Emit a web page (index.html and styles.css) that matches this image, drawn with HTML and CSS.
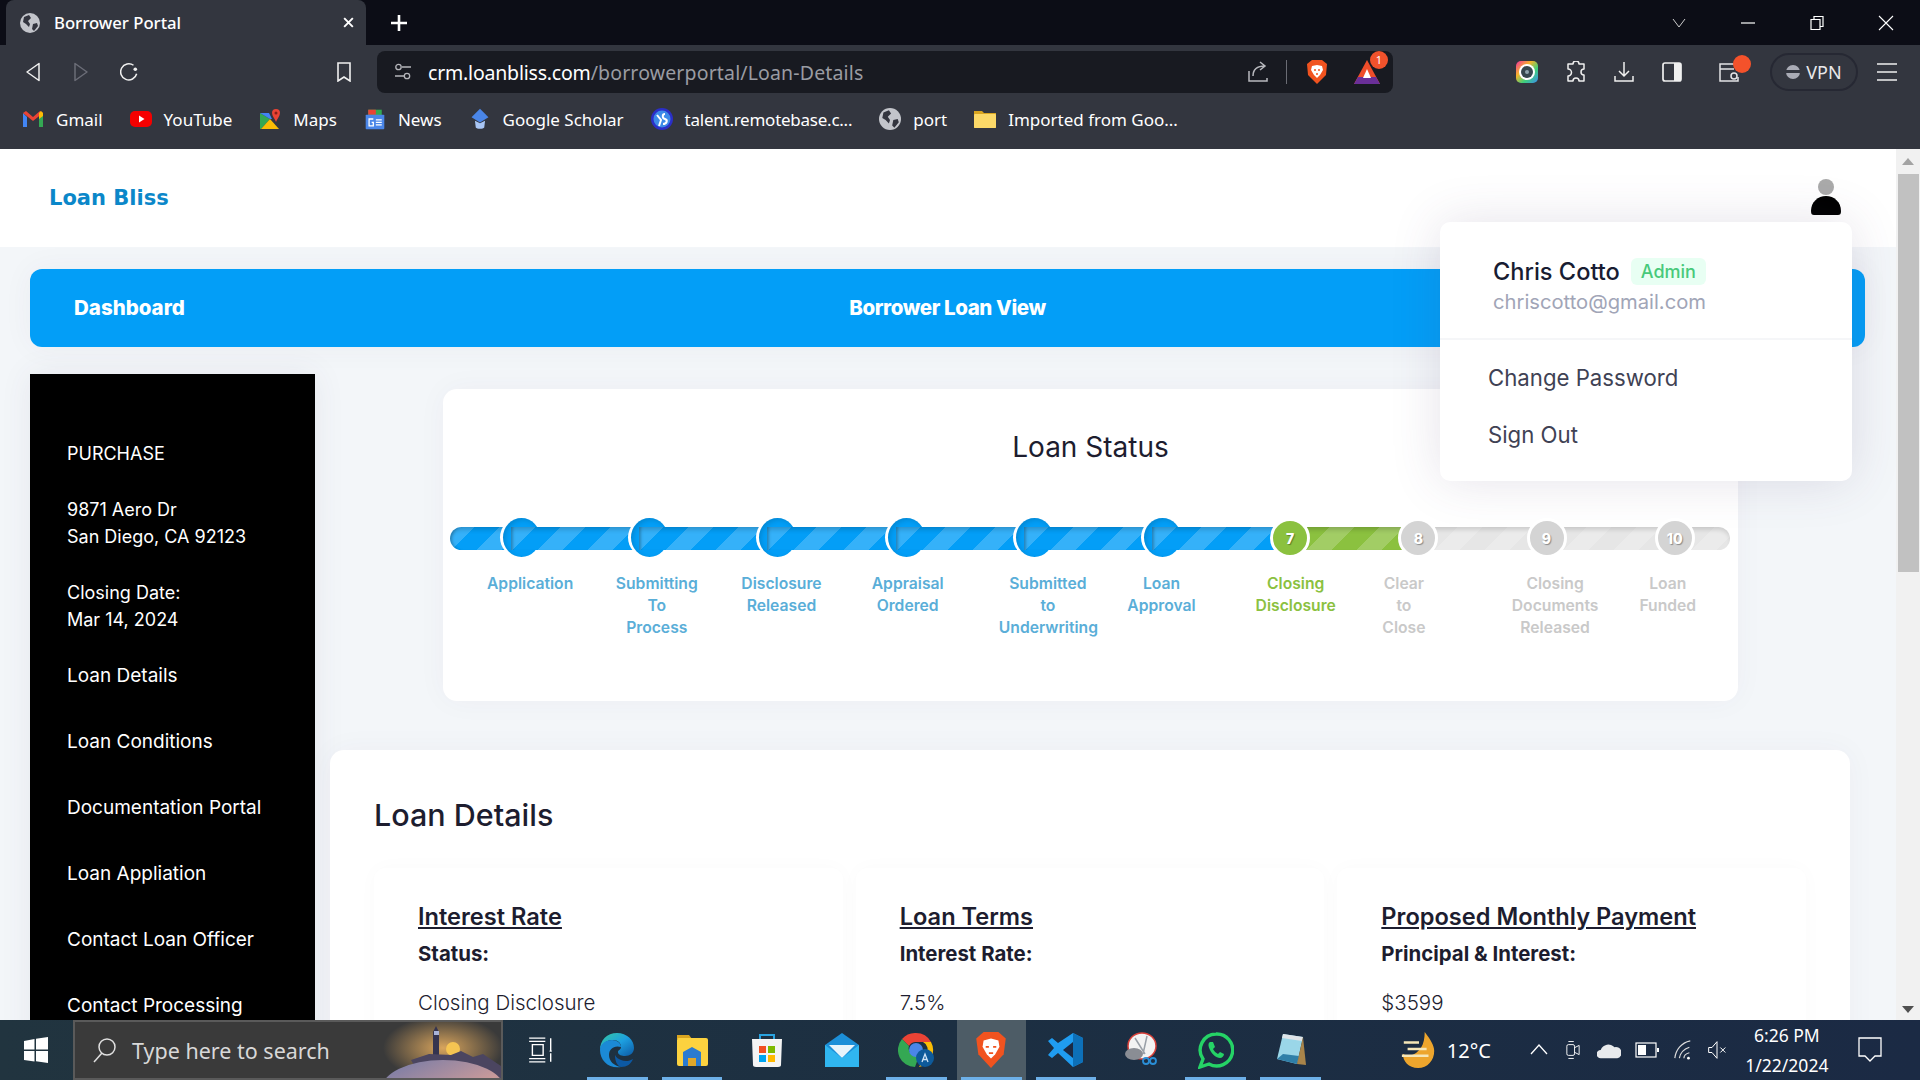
FILE: index.html
```html
<!DOCTYPE html>
<html lang="en">
<head>
    <meta charset="UTF-8">
    <title>Borrower Portal</title>
    <link rel="stylesheet" href="styles.css">
</head>
<body>

<!-- browser window chrome -->
<div class="tabstrip">
    <div class="tab">
        <svg class="ico-20" viewBox="0 0 20 20"><circle cx="10" cy="10" r="10" fill="#c3c5cb"/><path d="M4 4l5-2 2 3-3 3 2 3-1 3-3-3-3-2zM13 11l4-1 1 3-4 5-2-2z" fill="#33353f"/></svg>
        <span class="tab-title">Borrower Portal</span>
        <svg class="tab-close" viewBox="0 0 12 12"><path d="M2 2l8 8M10 2l-8 8" stroke="#fff" stroke-width="1.8"/></svg>
    </div>
    <svg class="tab-plus" viewBox="0 0 20 20"><path d="M10 2v16M2 10h16" stroke="#fff" stroke-width="2.6"/></svg>
    <div class="winctl">
        <svg class="winctl-ico" viewBox="0 0 16 16"><path d="M2 4l6 8 6-8" fill="none" stroke="#ccc" stroke-width="1"/></svg>
        <svg class="winctl-ico" viewBox="0 0 16 16"><path d="M1 8h14" stroke="#fff" stroke-width="1.2"/></svg>
        <svg class="winctl-ico" viewBox="0 0 16 16"><path d="M2 4.5h9v10H2zM5 4.5V1.500h9v10h-3" fill="none" stroke="#fff" stroke-width="1.2"/></svg>
        <svg class="winctl-ico" viewBox="0 0 16 16"><path d="M1 1l14 14M15 1L1 15" stroke="#fff" stroke-width="1.1"/></svg>
    </div>
</div>

<div class="toolbar">
    <div class="nav-btns">
        <svg class="nav-ico" viewBox="0 0 16 20"><path d="M14 1.500v17L2 10z" fill="none" stroke="#f0f0f0" stroke-width="1.5" stroke-linejoin="round"/></svg>
        <svg class="nav-ico" viewBox="0 0 16 20"><path d="M2 1.500v17L14 10z" fill="none" stroke="#6b6d77" stroke-width="1.5" stroke-linejoin="round"/></svg>
        <svg class="nav-ico" viewBox="0 0 20 20"><path d="M15 2.500A9 9 0 1 0 18.500 12" fill="none" stroke="#f0f0f0" stroke-width="1.7"/><circle cx="17" cy="7" r="2" fill="#f0f0f0"/></svg>
    </div>
    <svg class="bookmark-ico" viewBox="0 0 14 20"><path d="M1 1h12v18l-6-4-6 4z" fill="none" stroke="#f0f0f0" stroke-width="1.600"/></svg>
    <div class="urlbar">
        <svg class="ico-18" viewBox="0 0 18 18"><circle cx="4.500" cy="4" r="2.700" fill="none" stroke="#b5b6bb" stroke-width="1.300"/><path d="M8 4h9M1 13h9" stroke="#b5b6bb" stroke-width="1.300"/><circle cx="13" cy="13" r="2.700" fill="none" stroke="#b5b6bb" stroke-width="1.300"/></svg>
        <span class="url-text"><span class="url-host">crm.loanbliss.com</span>/borrowerportal/Loan-Details</span>
        <svg class="ico-22" viewBox="0 0 22 22"><path d="M2 10v10h18v-3M6 15c0-6 4-10 12-10M13 1l5 4-5 4" fill="none" stroke="#b8b9be" stroke-width="1.500"/></svg>
        <span class="url-sep"></span>
        <svg class="ico-shield" viewBox="0 0 22 26"><path d="M6 1h10l5 4-1 11-9 9-9-9L1 5z" fill="#f1531f"/><path d="M6 7l5-1 5 1 1 4-3 5-3 3-3-3-3-5z" fill="#fff"/><path d="M8 11h2M12 11h2M10 15h2" stroke="#f1531f" stroke-width="1.300"/></svg>
        <span class="rewards">
            <svg class="ico-rewards" viewBox="0 0 28 26"><path d="M14 1l13 24H1z" fill="#ef4d2a"/><path d="M1 25l4-7h18l4 7z" fill="#6a2f98"/><path d="M14 10l4 9h-8z" fill="#fff"/></svg>
            <span class="rewards-badge">1</span>
        </span>
    </div>
    <div class="ext-btns">
        <svg class="ico-24" viewBox="0 0 24 24"><defs><linearGradient id="rb" x1="0" y1="0" x2="1" y2="1"><stop offset="0" stop-color="#f22fa0"/><stop offset=".35" stop-color="#f7b32b"/><stop offset=".65" stop-color="#3ed07a"/><stop offset="1" stop-color="#3b8cf0"/></linearGradient></defs><rect x="1" y="1" width="22" height="22" rx="5" fill="url(#rb)"/><circle cx="12" cy="12" r="8" fill="#fff"/><circle cx="12" cy="12" r="6" fill="#37474f"/><circle cx="12" cy="12" r="2" fill="#90a4ae"/></svg>
        <svg class="ico-22" viewBox="0 0 22 22"><path d="M8 3a3 3 0 0 1 6 0h5v5a3 3 0 0 0 0 6v6h-5a3 3 0 0 0-6 0H3v-5a3 3 0 0 0 0-7V3z" fill="none" stroke="#f0f0f0" stroke-width="1.500" stroke-linejoin="round"/></svg>
        <svg class="ico-22" viewBox="0 0 22 22"><path d="M11 1v14M6 10l5 5 5-5M2 15v5h18v-5" fill="none" stroke="#f0f0f0" stroke-width="1.500"/></svg>
        <svg class="ico-22" viewBox="0 0 22 22"><rect x="2" y="2" width="18" height="18" rx="2" fill="none" stroke="#f0f0f0" stroke-width="1.700"/><rect x="13" y="2" width="7" height="18" fill="#f0f0f0"/></svg>
        <span class="wallet">
            <svg class="ico-22" viewBox="0 0 22 22"><path d="M20 10V3H2v17h18v-4M2 8h14" fill="none" stroke="#e4e4e6" stroke-width="1.500"/><circle cx="16" cy="15" r="3" fill="none" stroke="#e4e4e6" stroke-width="1.500"/></svg>
            <span class="wallet-dot"></span>
        </span>
        <div class="vpn"><span class="vpn-dot"></span>VPN</div>
        <svg class="ico-22" viewBox="0 0 22 22"><path d="M1 3h20M1 11h20M1 19h20" stroke="#f0f0f0" stroke-width="1.700"/></svg>
    </div>
</div>

<div class="bookmarks">
    <a class="bm"><svg class="ico-22" viewBox="0 0 22 22"><path d="M1 5v14h4V9z" fill="#4285f4"/><path d="M17 9v10h4V5z" fill="#34a853"/><path d="M1 5l3-2 7 6 7-6 3 2-10 8z" fill="#ea4335"/><path d="M17 5l2-2 2 2v3l-4 3z" fill="#fbbc05"/></svg>Gmail</a>
    <a class="bm"><svg class="ico-22" viewBox="0 0 22 22"><rect y="3" width="22" height="16" rx="5" fill="#f50000"/><path d="M9 7.500v7l5.500-3.500z" fill="#fff"/></svg>YouTube</a>
    <a class="bm"><svg class="ico-22" viewBox="0 0 22 22"><path d="M1 5l10 6-9 10H1z" fill="#34a853"/><path d="M2 21l9-10 9 10z" fill="#fbbc05"/><path d="M1 5h9l3 6-2 0z" fill="#4285f4"/><path d="M17 1a4 4 0 0 1 4 4c0 3-3 6-4 9-1-3-4-6-4-9a4 4 0 0 1 4-4z" fill="#ea4335"/><circle cx="17" cy="5" r="1.500" fill="#8a1f17"/></svg>Maps</a>
    <a class="bm"><svg class="ico-22" viewBox="0 0 22 26"><path d="M3 2h16v8H3z" fill="#34a853"/><path d="M3 2h9v6H3z" fill="#ea4335"/><rect x="0" y="8" width="22" height="17" rx="1" fill="#4a86e8"/><path d="M9 13H4v8h5v-4H7M12 14h7M12 17h7M12 20h7" fill="none" stroke="#fff" stroke-width="1.500"/></svg>News</a>
    <a class="bm"><svg class="ico-22" viewBox="0 0 22 26"><path d="M11 1l10 10-10 6L1 11z" fill="#4a86e8"/><path d="M5 15l6 3 6-3-1 8c-1 2-9 2-10 0z" fill="#a9c6f5"/></svg>Google Scholar</a>
    <a class="bm"><svg class="ico-22" viewBox="0 0 22 22"><circle cx="11" cy="11" r="11" fill="#2b2fc7"/><circle cx="11" cy="11" r="8.500" fill="#3d8be8"/><path d="M6 7l4 5-2 6M14 6c-3 0-3 4 0 5s2 5-2 5" fill="none" stroke="#fff" stroke-width="2"/></svg>talent.remotebase.c...</a>
    <a class="bm"><svg class="ico-22" viewBox="0 0 20 20"><circle cx="10" cy="10" r="10" fill="#c3c5cb"/><path d="M4 4l5-2 2 3-3 3 2 3-1 3-3-3-3-2zM13 11l4-1 1 3-4 5-2-2z" fill="#33353f"/></svg>port</a>
    <a class="bm"><svg class="ico-22" viewBox="0 0 22 22"><path d="M0 3h8l2 2h12v15H0z" fill="#d9a520"/><rect y="6" width="22" height="14" rx="1" fill="#fcd968"/></svg>Imported from Goo...</a>
</div>

<!-- page -->
<div class="viewport">
    <div class="page">
        <header class="topbar">
            <span class="logo">Loan Bliss</span>
            <svg class="user-ico" viewBox="0 0 32 38"><circle cx="16" cy="9" r="8" fill="#aaa"/><path d="M1 33c0-9 7-15 15-15s15 6 15 15c0 3-1 4-3 4H4c-2 0-3-1-3-4z" fill="#000"/></svg>
        </header>

        <div class="titlebar">
            <span class="titlebar-link">Dashboard</span>
            <span class="titlebar-title">Borrower Loan View</span>
        </div>

        <div class="columns">
            <aside class="sidebar">
                <p class="side-text">PURCHASE</p>
                <p class="side-text">9871 Aero Dr<br>San Diego, CA 92123</p>
                <p class="side-text">Closing Date:<br>Mar 14, 2024</p>
                <nav class="side-nav">
                    <a class="side-link">Loan Details</a>
                    <a class="side-link">Loan Conditions</a>
                    <a class="side-link">Documentation Portal</a>
                    <a class="side-link">Loan Appliation</a>
                    <a class="side-link">Contact Loan Officer</a>
                    <a class="side-link">Contact Processing</a>
                </nav>
            </aside>

            <main class="main">
                <section class="status-card">
                    <h2 class="status-title">Loan Status</h2>
                    <div class="track">
                        <div class="seg seg-lead blue"><span class="fill"></span></div>
                        <div class="seg blue"><span class="dot"></span><span class="fill"></span></div>
                        <div class="seg blue"><span class="dot"></span><span class="fill"></span></div>
                        <div class="seg blue"><span class="dot"></span><span class="fill"></span></div>
                        <div class="seg blue"><span class="dot"></span><span class="fill"></span></div>
                        <div class="seg blue"><span class="dot"></span><span class="fill"></span></div>
                        <div class="seg blue"><span class="dot"></span><span class="fill"></span></div>
                        <div class="seg green"><span class="dot">7</span><span class="fill"></span></div>
                        <div class="seg gray"><span class="dot">8</span><span class="fill"></span></div>
                        <div class="seg gray"><span class="dot">9</span><span class="fill"></span></div>
                        <div class="seg seg-tail gray"><span class="dot">10</span><span class="fill"></span></div>
                    </div>
                    <div class="labels">
                        <span class="label done">Application</span>
                        <span class="label done">Submitting<br>To<br>Process</span>
                        <span class="label done">Disclosure<br>Released</span>
                        <span class="label done">Appraisal<br>Ordered</span>
                        <span class="label done">Submitted<br>to<br>Underwriting</span>
                        <span class="label done">Loan<br>Approval</span>
                        <span class="label now">Closing<br>Disclosure</span>
                        <span class="label todo">Clear<br>to<br>Close</span>
                        <span class="label todo">Closing<br>Documents<br>Released</span>
                        <span class="label todo">Loan<br>Funded</span>
                    </div>
                </section>

                <section class="details-card">
                    <h2 class="details-title">Loan Details</h2>
                    <div class="details-grid">
                        <div class="info">
                            <h3 class="info-head">Interest Rate</h3>
                            <p class="info-key">Status:</p>
                            <p class="info-val">Closing Disclosure</p>
                        </div>
                        <div class="info">
                            <h3 class="info-head">Loan Terms</h3>
                            <p class="info-key">Interest Rate:</p>
                            <p class="info-val">7.5%</p>
                        </div>
                        <div class="info">
                            <h3 class="info-head">Proposed Monthly Payment</h3>
                            <p class="info-key">Principal &amp; Interest:</p>
                            <p class="info-val">$3599</p>
                        </div>
                    </div>
                </section>
            </main>
        </div>

        <div class="user-menu">
            <div class="user-head">
                <div class="user-line"><span class="user-name">Chris Cotto</span><span class="user-badge">Admin</span></div>
                <div class="user-mail">chriscotto@gmail.com</div>
            </div>
            <div class="user-links">
                <a class="user-link">Change Password</a>
                <a class="user-link">Sign Out</a>
            </div>
        </div>
    </div>

    <div class="scrollbar">
        <span class="arrow-up"></span>
        <span class="thumb"></span>
        <span class="arrow-down"></span>
    </div>
</div>

<!-- windows taskbar -->
<div class="taskbar">
    <div class="start">
        <svg class="ico-24w" viewBox="0 0 24 26"><path d="M0 4l10.500-2v10.500H0zM12 1.700L24 0v12.500H12zM0 14h10.500v10.500L0 23zM12 14h12v12l-12-1.800z" fill="#fff"/></svg>
    </div>
    <div class="search">
        <svg class="search-ico" viewBox="0 0 24 26"><circle cx="14" cy="10" r="8" fill="none" stroke="#e0e0e0" stroke-width="1.500"/><path d="M9 16L1 25" stroke="#e0e0e0" stroke-width="1.500"/></svg>
        <span class="search-text">Type here to search</span>
        <svg class="search-art" viewBox="0 0 120 56"><defs><radialGradient id="glow"><stop offset="0" stop-color="#d8a45c"/><stop offset="1" stop-color="#3a3a3a"/></radialGradient><linearGradient id="hill" x1="0" y1="0" x2="1" y2="1"><stop offset="0" stop-color="#6e78a8"/><stop offset=".6" stop-color="#c99a9a"/><stop offset="1" stop-color="#3c4a86"/></linearGradient></defs><ellipse cx="62" cy="26" rx="60" ry="32" fill="url(#glow)"/><circle cx="72" cy="27" r="7" fill="#f5c452"/><path d="M52 34V10l3-6 3 6v24z" fill="#35344f"/><rect x="53" y="9" width="5" height="4" fill="#aab4d8"/><path d="M30 38l18-6 22 1 10-4 12 6 10-3 18 12v12H40z" fill="#4b4560"/><ellipse cx="62" cy="68" rx="62" ry="30" fill="url(#hill)"/></svg>
    </div>
    <div class="task-btns">
        <span class="task task-view"><svg class="ico-26" viewBox="0 0 24 26"><path d="M1 5h15M1 2h15M4 8h10v10H4zM1 21h15M1 24h15M21 2v12M21 16v8M20 14h2" fill="none" stroke="#fff" stroke-width="1.300"/></svg></span>
        <span class="task open"><svg class="ico-36" viewBox="0 0 36 36"><defs><linearGradient id="ed" x1="0" y1="0" x2="1" y2="1"><stop offset="0" stop-color="#35c9a0"/><stop offset=".5" stop-color="#1d9fe0"/><stop offset="1" stop-color="#0c59a4"/></linearGradient></defs><path d="M18 1c10 0 17 7 17 15 0 5-4 8-9 8-3 0-7-1-7-4 0-2 3-2 3-5 0-4-3-7-8-7C7 8 2 13 1 18 1 8 8 1 18 1z" fill="url(#ed)"/><path d="M1 18c0-6 6-10 12-10 5 0 9 3 9 7-7-2-12 2-12 8 0 6 5 11 12 12C10 37 1 29 1 18z" fill="#1b8ad6"/><path d="M22 35c6 0 10-3 12-8-3 2-8 3-12 1-3-1-5-3-6-5 0 6 2 11 6 12z" fill="#0c59a4"/></svg></span>
        <span class="task open"><svg class="ico-36" viewBox="0 0 36 36"><path d="M3 3h12l3 4H3z" fill="#d9a520"/><rect x="3" y="6" width="31" height="28" rx="2" fill="#fcd23f"/><path d="M9 34V20l9-5 9 5v14h-5v-8h-8v8z" fill="#2a7bd0"/><rect x="14" y="26" width="8" height="8" fill="#e0a82a"/></svg></span>
        <span class="task"><svg class="ico-36" viewBox="0 0 36 36"><path d="M11 8V3h14v5" fill="none" stroke="#29a3e0" stroke-width="2"/><path d="M3 7h30l-1 26c0 1-1 2-3 2H7c-2 0-3-1-3-2z" fill="#f4f4f4"/><rect x="10" y="14" width="7" height="7" fill="#f25022"/><rect x="19" y="14" width="7" height="7" fill="#7fba00"/><rect x="10" y="23" width="7" height="7" fill="#00a4ef"/><rect x="19" y="23" width="7" height="7" fill="#ffb900"/></svg></span>
        <span class="task"><svg class="ico-36" viewBox="0 0 36 36"><path d="M1 13L18 1l17 12v22H1z" fill="#1c8fd8"/><path d="M5 13h26L18 26z" fill="#e8f4fb"/><path d="M1 13l17 13 17-13v22H1z" fill="#30b6f0"/></svg></span>
        <span class="task open"><svg class="ico-36" viewBox="0 0 36 36"><path d="M18 1a17 17 0 0 1 15 9H18a8 8 0 0 0-7 4L4 7a17 17 0 0 1 14-6z" fill="#ea4335"/><path d="M33 10a17 17 0 0 1-12 25l7-13a8 8 0 0 0-3-12z" fill="#fbbc05"/><path d="M4 7l7 7a8 8 0 0 0 10 10l-4 11A17 17 0 0 1 4 7z" fill="#34a853"/><circle cx="18" cy="18" r="7" fill="#4a86e8"/><circle cx="27" cy="26" r="9" fill="#0e5a9a"/><path d="M24 30l3-8 3 8M25 27.500h4" fill="none" stroke="#cfe3f5" stroke-width="1.300"/></svg></span>
        <span class="task open active"><svg class="ico-36" viewBox="0 0 30 36"><path d="M8 1h14l7 6-2 15-12 13L3 22 1 7z" fill="#f1531f"/><path d="M8 9l7-2 7 2 1 6-4 7-4 4-4-4-4-7z" fill="#fff"/><path d="M10 15h3M17 15h3M13 21h4" stroke="#f1531f" stroke-width="1.800"/></svg></span>
        <span class="task open"><svg class="ico-36" viewBox="0 0 36 36"><path d="M25 1l10 5v24l-10 5-15-14-6 5-4-3 6-7-6-7 4-3 6 5z" fill="#1f9cf0"/><path d="M25 1l10 5v24l-10 5z" fill="#0d70b8"/><path d="M25 10v16l-10-8z" fill="#1b2a44"/></svg></span>
        <span class="task"><svg class="ico-36" viewBox="0 0 36 36"><ellipse cx="19" cy="14" rx="14" ry="13" fill="#f3f3f3" stroke="#d9413a" stroke-width="1.500"/><path d="M12 6l10 16M24 4l-4 18" stroke="#9aa0a8" stroke-width="1.500"/><ellipse cx="11" cy="22" rx="9" ry="6" fill="#8a8d94"/><circle cx="23" cy="29" r="3" fill="none" stroke="#2a8ed6" stroke-width="1.800"/><circle cx="30" cy="29" r="3" fill="none" stroke="#2a8ed6" stroke-width="1.800"/></svg></span>
        <span class="task open"><svg class="ico-36" viewBox="0 0 36 36"><path d="M18 2a16 16 0 0 0-13 25L2 35l9-3A16 16 0 1 0 18 2z" fill="none" stroke="#25d366" stroke-width="3.400"/><path d="M12 10c-2 1-2 4 0 8s6 8 10 8c2 0 4-2 4-4l-4-2-2 2c-2-1-4-3-5-5l2-2-2-5z" fill="#25d366"/></svg></span>
        <span class="task open"><svg class="ico-36" viewBox="0 0 36 36"><path d="M11 2l20 3-6 27-20-5z" fill="#9ad6e8"/><path d="M11 2l20 3-1 4-20-3z" fill="#dfe4e8"/><path d="M5 27l20 5 2-8-16-2z" fill="#2f7fa8"/><path d="M31 5l3 28-9-1z" fill="#a8844a"/></svg></span>
    </div>
    <div class="weather">
        <svg class="ico-36" viewBox="0 0 36 40"><path d="M24 1c6 8 10 14 10 20 0 10-7 18-17 18S1 32 1 24C6 28 14 26 20 18c3-5 4-11 4-17z" fill="#eda52d"/><path d="M2 12h16M6 19h20M0 26h28" stroke="#f5e6b8" stroke-width="2.600"/></svg>
        <span class="temp">12°C</span>
    </div>
    <div class="tray">
        <svg class="ico-20" viewBox="0 0 20 20"><path d="M2 14l8-9 8 9" fill="none" stroke="#fff" stroke-width="1.300"/></svg>
        <svg class="ico-20" viewBox="0 0 20 26"><rect x="2" y="6" width="10" height="14" rx="2" fill="none" stroke="#fff" stroke-width="1.200"/><path d="M12 10l6-3v12l-6-3M4 2h7M4 24h7" fill="none" stroke="#fff" stroke-width="1.200"/></svg>
        <svg class="ico-24" viewBox="0 0 26 20"><path d="M4 19a4 4 0 0 1 0-9 9 9 0 0 1 15-3 6 6 0 0 1 3 12z" fill="#e8eaec"/></svg>
        <svg class="ico-24" viewBox="0 0 24 16"><rect x="1" y="1" width="20" height="14" fill="none" stroke="#fff" stroke-width="1.200"/><rect x="3" y="3" width="8" height="10" fill="#fff"/><rect x="22" y="6" width="2" height="4" fill="#fff"/></svg>
        <svg class="ico-20" viewBox="0 0 20 22"><path d="M1 20C2 11 8 3 18 1M6 20c1-6 5-10 11-12M11 20c0-3 2-5 6-6" fill="none" stroke="#ddd" stroke-width="1.300"/><circle cx="16" cy="20" r="1.500" fill="#fff"/></svg>
        <svg class="ico-20" viewBox="0 0 22 24"><path d="M1 9h4l6-7v20l-6-7H1z" fill="none" stroke="#fff" stroke-width="1.200"/><path d="M15 9l6 6M21 9l-6 6" stroke="#fff" stroke-width="1.200"/></svg>
    </div>
    <div class="clock"><span>6:26 PM</span><span>1/22/2024</span></div>
    <svg class="ico-notif" viewBox="0 0 24 26"><path d="M1 1h22v18h-6l-5 5-5-5H1z" fill="none" stroke="#fff" stroke-width="1.300"/></svg>
</div>

</body>
</html>
```

FILE: styles.css
```css
html, body {
    margin: 0;
    height: 100%;
    overflow: hidden;
}

body {
    display: flex;
    flex-direction: column;
    font-family: Inter, sans-serif;
    background: #fff;
}

svg {
    display: block;
    flex: none;
}

.ico-18 { width: 18px; height: 18px; }
.ico-20 { width: 20px; height: 20px; }
.ico-22 { width: 22px; height: 22px; }
.ico-24 { width: 24px; height: 24px; }
.ico-26 { width: 26px; height: 28px; }
.ico-36 { width: 36px; height: 38px; }

/* browser chrome */
.tabstrip {
    height: 45px;
    background: #0c0d16;
    display: flex;
    align-items: flex-end;
    padding-left: 6px;
    flex: none;
}

.tab {
    width: 360px;
    height: 45px;
    box-sizing: border-box;
    background: #33363f;
    border-radius: 8px 8px 0 0;
    display: flex;
    align-items: center;
    padding: 0 11px 0 14px;
    color: #fff;
}

.tab-title {
    margin-left: 14px;
    font: 500 16.700px "Noto Sans", sans-serif;
    flex: 1;
}

.tab-close {
    width: 13px;
    height: 13px;
}

.tab-plus {
    width: 20px;
    height: 20px;
    margin: 0 0 12px 23px;
}

.winctl {
    margin-left: auto;
    height: 45px;
    display: flex;
    align-items: center;
    padding-right: 26px;
    gap: 53px;
}

.winctl-ico {
    width: 16px;
    height: 16px;
}

.toolbar {
    height: 58px;
    box-sizing: border-box;
    padding-top: 6px;
    background: #33363f;
    display: flex;
    align-items: flex-start;
    flex: none;
}

.nav-btns {
    width: 337px;
    height: 42px;
    display: flex;
    align-items: center;
    padding-left: 24px;
    box-sizing: border-box;
    gap: 30px;
}

.nav-ico {
    width: 18px;
    height: 20px;
}

.bookmark-ico {
    width: 14px;
    height: 20px;
    margin: 11px 26px 0 0;
}

.urlbar {
    width: 1016px;
    height: 42px;
    box-sizing: border-box;
    background: #181a21;
    border-radius: 8px;
    display: flex;
    align-items: center;
    padding: 0 12px 0 17px;
}

.url-text {
    margin-left: 16px;
    flex: 1;
    font: 400 19.500px "Noto Sans", sans-serif;
    color: #9a9ca3;
    letter-spacing: .15px;
}

.url-host {
    color: #fff;
    letter-spacing: -.2px;
}

.url-sep {
    width: 1px;
    height: 24px;
    background: #6a6c74;
    margin: 0 19px 0 17px;
}

.ico-shield {
    width: 22px;
    height: 26px;
    margin-right: 25px;
}

.rewards {
    position: relative;
    display: block;
    width: 28px;
    height: 26px;
}

.ico-rewards {
    width: 28px;
    height: 26px;
}

.rewards-badge {
    position: absolute;
    top: -8px;
    right: -7px;
    width: 18px;
    height: 18px;
    border-radius: 50%;
    background: #f1522c;
    color: #fff;
    font: 400 11px/18px "Noto Sans", sans-serif;
    text-align: center;
}

.ext-btns {
    flex: 1;
    height: 42px;
    display: flex;
    align-items: center;
    padding-left: 122px;
    gap: 26px;
}

.wallet {
    position: relative;
    display: block;
    margin-left: 9px;
}

.wallet-dot {
    position: absolute;
    top: -6px;
    right: -11px;
    width: 18px;
    height: 18px;
    border-radius: 50%;
    background: #f4522b;
}

.vpn {
    width: 88px;
    height: 38px;
    box-sizing: border-box;
    margin-left: 4px;
    border: 2px solid #262833;
    border-radius: 19px;
    display: flex;
    align-items: center;
    justify-content: center;
    gap: 6px;
    color: #e8e8ea;
    font: 400 18px "Noto Sans", sans-serif;
}

.vpn-dot {
    width: 14px;
    height: 14px;
    border-radius: 50%;
    background: linear-gradient(#a9abb5 0 5px, #33363f 5px 8px, #a9abb5 8px);
}

.ext-btns > svg:last-child {
    margin-left: -8px;
}

.bookmarks {
    height: 46px;
    box-sizing: border-box;
    background: #33363f;
    display: flex;
    align-items: center;
    padding: 0 0 14px 22px;
    gap: 27px;
    flex: none;
}

.bm {
    display: flex;
    align-items: center;
    gap: 12px;
    color: #fff;
    font: 400 17px "Noto Sans", sans-serif;
}

.bm:nth-child(6) {
    letter-spacing: -.25px;
}

/* page */
.viewport {
    flex: 1;
    min-height: 0;
    display: flex;
}

.page {
    position: relative;
    flex: 1;
    min-width: 0;
    overflow: hidden;
    background: #f3f6f9;
}

.topbar {
    height: 98px;
    background: #fff;
    display: flex;
    align-items: center;
    justify-content: space-between;
    padding: 0 54px 0 49px;
}

.logo {
    font: 700 21px "DejaVu Sans", sans-serif;
    color: #0b87c9;
}

.user-ico {
    width: 32px;
    height: 38px;
    margin-top: -2px;
}

.titlebar {
    margin: 22px 31px 0 30px;
    height: 78px;
    box-sizing: border-box;
    padding: 0 44px 2px;
    background: #039ef7;
    border-radius: 12px;
    display: grid;
    grid-template-columns: 1fr auto 1fr;
    align-items: center;
    color: #fff;
    font-size: 20.500px;
    font-weight: 800;
    box-shadow: 0 0 30px rgba(82, 63, 105, .05);
}

.titlebar-title {
    letter-spacing: -.4px;
}

.columns {
    display: flex;
    margin: 27px 31px 0 30px;
}

.sidebar {
    width: 285px;
    flex: none;
    height: 700px;
    box-sizing: border-box;
    background: #000;
    color: #fff;
    padding: 66px 0 0 37px;
    font-size: 18px;
    line-height: 27px;
    box-shadow: 0 0 30px rgba(82, 63, 105, .08);
}

.side-text {
    margin: 0 0 29px;
}

.side-nav {
    display: flex;
    flex-direction: column;
    gap: 39px;
    margin-top: 1px;
    font-size: 19px;
}

.main {
    flex: 1;
    min-width: 0;
    padding: 15px 15px 0;
}

.status-card {
    margin: 0 112px 0 113px;
    height: 312px;
    box-sizing: border-box;
    padding-top: 41px;
    background: #fff;
    border-radius: 14px;
    box-shadow: 0 0 30px rgba(82, 63, 105, .04);
}

.status-title {
    margin: 0;
    text-align: center;
    font-size: 28px;
    line-height: 34px;
    font-weight: 400;
    color: #1d1d2f;
}

/* stepper */
.track {
    display: flex;
    margin: 63px 0 0 7px;
    height: 23px;
}

.seg {
    position: relative;
    width: 128.200px;
    flex: none;
}

.seg-lead { width: 61px; }
.seg-tail { width: 65px; }

.fill {
    position: relative;
    display: block;
    height: 23px;
    background-image: linear-gradient(135deg, rgba(255, 255, 255, .2) 25%, transparent 25%, transparent 50%, rgba(255, 255, 255, .2) 50%, rgba(255, 255, 255, .2) 75%, transparent 75%);
    background-size: 50px 50px;
    box-shadow: inset 0 4px 4px -1px rgba(0, 0, 0, .16), inset 4px 0 3px -2px rgba(0, 0, 0, .22);
}

.seg-lead .fill { border-radius: 12px 0 0 12px; }
.seg-tail .fill { border-radius: 0 12px 12px 0; }

.blue .fill { background-color: #039ef7; }
.green .fill { background-color: #8bc13f; }
.gray .fill {
    background-color: #e6e6e6;
    box-shadow: inset 0 4px 4px -1px rgba(0, 0, 0, .12);
}

.dot {
    position: absolute;
    top: -9px;
    left: -10px;
    width: 40px;
    height: 40px;
    box-sizing: border-box;
    border-radius: 50%;
    color: #fff;
    font-size: 14px;
    font-weight: 800;
    line-height: 36px;
    text-align: center;
    text-shadow: 1px 1px 1px rgba(0, 0, 0, .35);
}

.blue .dot {
    left: -8px;
    width: 37px;
    height: 39px;
    background: #039ef7;
    box-shadow: -3px 0 0 #fff, inset 2px 2px 5px rgba(0, 0, 0, .14);
}

.green .dot,
.gray .dot {
    z-index: 1;
    border: 3px solid #fff;
}

.green .dot { background: #8bc13f; }
.gray .dot { background: #d4d4d4; }

.labels {
    display: grid;
    grid-template-columns: repeat(10, 128.200px);
    margin: 23px 0 0 13px;
    font-size: 15.700px;
    font-weight: 600;
    line-height: 22px;
    text-align: center;
}

.done { color: #5aaed8; }
.now { color: #8bc13f; }
.todo { color: #c9c9c9; }

/* shift each caption off its dot, as on the live page */
.label:nth-child(1) { margin-left: 20px; }
.label:nth-child(2) { margin-left: 17px; }
.label:nth-child(3) { margin-left: 10px; }
.label:nth-child(4) { margin-left: 6px; }
.label:nth-child(5) { margin-left: 30px; }
.label:nth-child(6) { margin-left: 1px; }
.label:nth-child(7) { margin-left: 13px; }
.label:nth-child(8) { margin-left: -27px; }
.label:nth-child(9) { margin-left: 19px; }
.label:nth-child(10) { margin-left: -12px; }

.details-card {
    margin-top: 49px;
    height: 400px;
    box-sizing: border-box;
    padding: 44px 44px 0;
    background: #fff;
    border-radius: 14px;
    box-shadow: 0 0 30px rgba(82, 63, 105, .04);
}

.details-title {
    margin: 0;
    font-size: 30.500px;
    line-height: 42px;
    font-weight: 500;
    color: #1d1d2f;
}

.details-grid {
    display: grid;
    grid-template-columns: repeat(3, 1fr);
    gap: 13px;
    margin-top: 32px;
}

.info {
    height: 200px;
    box-sizing: border-box;
    padding: 34px 0 0 44px;
    border-radius: 12px;
    box-shadow: 0 0 20px rgba(82, 63, 105, .025);
    color: #1d1d2f;
}

.info-head {
    margin: 0;
    font-size: 23.600px;
    line-height: 30px;
    font-weight: 600;
    text-decoration: underline;
}

.info-key {
    margin: 8px 0 0;
    font-size: 20.400px;
    line-height: 27px;
    font-weight: 700;
}

.info-val {
    margin: 22px 0 0;
    font-size: 20.500px;
    line-height: 28px;
    font-weight: 300;
}

/* account dropdown */
.user-menu {
    position: absolute;
    top: 73px;
    right: 44px;
    width: 412px;
    height: 259px;
    background: #fff;
    border-radius: 10px;
    box-shadow: 0 0 50px rgba(82, 63, 105, .15);
}

.user-head {
    height: 118px;
    box-sizing: border-box;
    padding: 35px 0 0 53px;
    border-bottom: 2px solid #f5f6f8;
}

.user-line {
    display: flex;
    align-items: center;
    gap: 11px;
}

.user-name {
    font-size: 23.600px;
    font-weight: 500;
    color: #181c32;
}

.user-badge {
    height: 27px;
    padding: 0 10px;
    background: #e8fff3;
    border-radius: 6px;
    color: #47c97a;
    font-size: 18px;
    font-weight: 500;
    line-height: 27px;
}

.user-mail {
    margin-top: 2px;
    font-size: 20.200px;
    line-height: 27px;
    color: #a1a5b7;
}

.user-links {
    display: flex;
    flex-direction: column;
    gap: 29px;
    padding: 24px 0 0 48px;
}

.user-link {
    font-size: 22.200px;
    line-height: 28px;
    color: #3f4254;
}

/* fake scrollbar */
.scrollbar {
    position: relative;
    width: 24px;
    flex: none;
    background: #f1f1f1;
    display: flex;
    flex-direction: column;
    align-items: center;
}

.arrow-up,
.arrow-down {
    width: 0;
    height: 0;
    border-left: 6px solid transparent;
    border-right: 6px solid transparent;
    flex: none;
}

.arrow-up {
    margin: 9px 0 9px;
    border-bottom: 7px solid #a3a3a3;
}

.arrow-down {
    margin-top: auto;
    margin-bottom: 7px;
    border-top: 7px solid #505050;
}

.thumb {
    width: 21px;
    height: 398px;
    background: #c1c1c1;
}

/* windows taskbar */
.taskbar {
    height: 60px;
    flex: none;
    display: flex;
    align-items: center;
    background: linear-gradient(90deg, #21343f, #1c2f42 50%, #1b2a44);
}

.start {
    width: 73px;
    display: flex;
    justify-content: center;
    padding-right: 1px;
    box-sizing: border-box;
}

.ico-24w {
    width: 24px;
    height: 26px;
}

.search {
    width: 430px;
    height: 60px;
    box-sizing: border-box;
    background: #3a3a3a;
    border: solid #5a5a5a;
    border-width: 2px;
    display: flex;
    align-items: center;
    padding-left: 18px;
    position: relative;
    overflow: hidden;
}

.search-ico {
    width: 24px;
    height: 26px;
}

.search-text {
    margin-left: 15px;
    font: 400 21.500px "Noto Sans", sans-serif;
    color: #d8d8d8;
}

.search-art {
    position: absolute;
    right: 0;
    top: 0;
    width: 120px;
    height: 56px;
}

.task-btns {
    display: flex;
    height: 60px;
}

.task {
    position: relative;
    width: 74.800px;
    height: 60px;
    display: flex;
    align-items: center;
    justify-content: center;
}

.task-view {
    width: 76.800px;
}

.task.open::after {
    content: "";
    position: absolute;
    left: 7px;
    right: 7px;
    bottom: 0;
    height: 3px;
    background: #6db0e8;
}

.task.active {
    background: linear-gradient(#4d5c66, #4d5c66) center / 69px 100% no-repeat;
}

.weather {
    display: flex;
    align-items: center;
    gap: 10px;
    margin-left: 73px;
    color: #fff;
    font: 400 20px "Noto Sans", sans-serif;
}

.tray {
    display: flex;
    align-items: center;
    gap: 14px;
    margin-left: 38px;
}

.clock {
    width: 128px;
    margin-left: -4px;
    display: flex;
    flex-direction: column;
    align-items: center;
    gap: 6px;
    color: #fff;
    font: 400 17.500px "Noto Sans", sans-serif;
}

.ico-notif {
    width: 24px;
    height: 26px;
    margin-left: 7px;
}
```
